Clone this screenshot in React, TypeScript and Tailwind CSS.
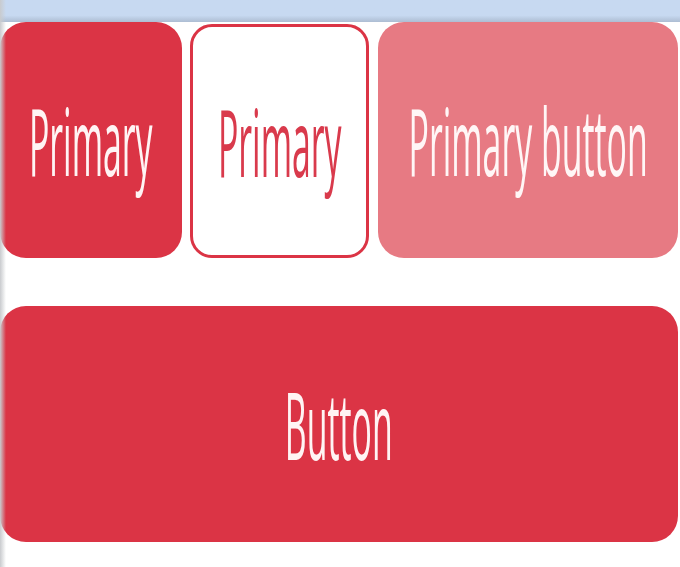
import React from 'react';

function Label({ text, className = '' }: { text: string; className?: string }) {
  return (
    <span className={`inline-block whitespace-nowrap text-[94px] leading-none font-medium scale-x-[0.36] ${className}`}>
      {text}
    </span>
  );
}

export default function App() {
  return (
    <div
      className="relative w-[680px] h-[567px] overflow-hidden bg-white"
      style={{ fontFamily: '"Open Sans", "Noto Sans", sans-serif' }}
    >
      {/* title strip of the host window */}
      <div className="h-[22px] bg-gradient-to-b from-[#c7d9f1] from-70% to-[#adbdd3]" />

      <div className="flex flex-col gap-[48px]">
        <div className="flex items-start">
          <button className="flex items-center justify-center w-[182px] h-[236px] rounded-[26px] bg-[#db3445] text-[#fff4f4]">
            <Label text="Primary" />
          </button>
          <button className="ml-[8px] mt-[2px] flex items-center justify-center w-[179px] h-[234px] rounded-[22px] border-[3px] border-[#db3445] bg-white text-[#d93a4c]">
            <Label text="Primary" />
          </button>
          <button className="ml-[9px] flex items-center justify-center w-[300px] h-[236px] rounded-[26px] bg-[#e77a83] text-[#fff6f6]">
            <Label text="Primary button" />
          </button>
        </div>

        <button className="flex items-center justify-center w-[678px] h-[236px] rounded-[26px] bg-[#db3445] text-[#fff4f4]">
          <Label text="Button" />
        </button>
      </div>

      {/* window edge on the left */}
      <div className="absolute left-0 top-0 bottom-0 w-[6px] bg-gradient-to-r from-[#c9cbce] to-transparent" />
    </div>
  );
}
